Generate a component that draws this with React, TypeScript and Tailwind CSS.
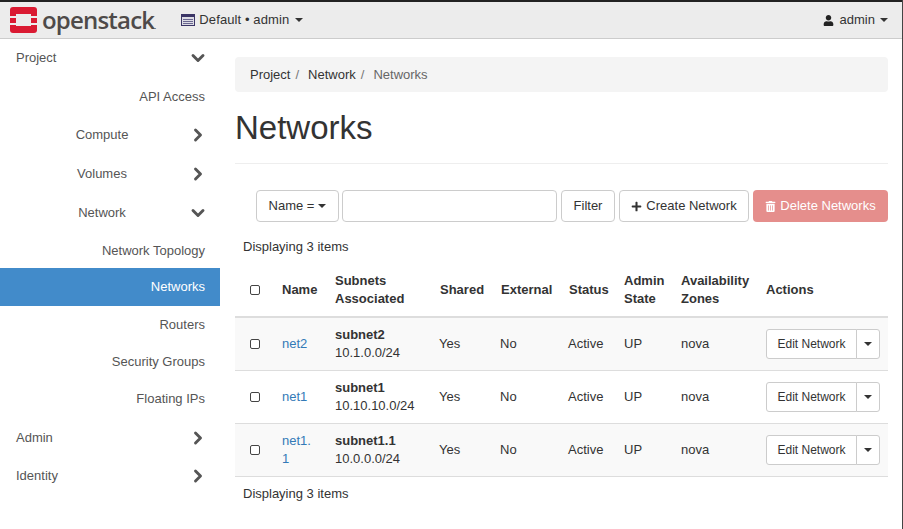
import { ChevronDown, ChevronRight } from "lucide-react"
import { FaPlus, FaTrashAlt, FaUser } from "react-icons/fa"

const navRows = [
  { label: "Compute", height: "h-[39px]", open: false },
  { label: "Volumes", height: "h-[38px] pt-[2px]", open: false },
  { label: "Network", height: "h-[39px] pt-[2px]", open: true },
]

const subRows = ["Network Topology", "Networks", "Routers", "Security Groups", "Floating IPs"]

const networks = [
  { name: "net2", subnet: "subnet2", cidr: "10.1.0.0/24", striped: true },
  { name: "net1", subnet: "subnet1", cidr: "10.10.10.0/24", striped: false },
  { name: "net1.1", subnet: "subnet1.1", cidr: "10.0.0.0/24", striped: true },
]

function Caret() {
  return <span className="inline-block h-0 w-0 border-x-[4px] border-t-[4px] border-x-transparent border-t-[#333]" />
}

function Logo() {
  return (
    <div className="flex items-center gap-[5px]">
      <svg width="27" height="26" viewBox="0 0 27 26">
        <rect x="0" y="0" width="27" height="26" rx="3" fill="#da1a32" />
        <rect x="6" y="7" width="15" height="12" fill="#ececec" />
        <rect x="0" y="9" width="6" height="2" fill="#ececec" />
        <rect x="21" y="9" width="6" height="2" fill="#ececec" />
        <rect x="0" y="16" width="6" height="2" fill="#ececec" />
        <rect x="21" y="16" width="6" height="2" fill="#ececec" />
      </svg>
      <span className="font-['Open_Sans',sans-serif] text-[24px] leading-none font-semibold tracking-[-0.8px] text-[#4e4a49]">
        openstack<span className="text-[7px]">.</span>
      </span>
    </div>
  )
}

function ProjectIcon() {
  return (
    <svg width="14" height="12" viewBox="0 0 14 12" className="text-[#3b3566]">
      <rect x="0.5" y="0.5" width="13" height="11" fill="#dcdce4" stroke="currentColor" />
      <rect x="0" y="0" width="14" height="3" fill="currentColor" />
      <rect x="2" y="5" width="10" height="1" fill="#6a6690" />
      <rect x="2" y="7" width="10" height="1" fill="#6a6690" />
      <rect x="2" y="9" width="10" height="1" fill="#6a6690" />
    </svg>
  )
}

function Sidebar() {
  return (
    <aside className="w-[220px] shrink-0 text-[13px] text-[#555]">
      <div className="flex h-[37px] items-center justify-between pl-[16px] pr-[12px]">
        <span>Project</span>
        <ChevronDown size={20} strokeWidth={3.5} className="mt-[1px]" />
      </div>
      <div className="flex h-[39px] items-center justify-end pr-[15px] pt-[2px]">API Access</div>
      {navRows.map((row) => (
        <div key={row.label} className={`flex ${row.height} items-center pr-[12px]`}>
          <span className="w-[204px] text-center">{row.label}</span>
          {row.open ? (
            <ChevronDown size={20} strokeWidth={3.5} className="-ml-[16px] shrink-0" />
          ) : (
            <ChevronRight size={20} strokeWidth={3.5} className="-ml-[16px] shrink-0" />
          )}
        </div>
      ))}
      {subRows.map((label) => (
        <div
          key={label}
          className={
            label === "Networks"
              ? "flex h-[38px] items-center justify-end bg-[#428bca] pr-[15px] text-white"
              : label === "Network Topology"
                ? "flex h-[37px] items-center justify-end pr-[15px] pt-[2px]"
                : "flex h-[37px] items-center justify-end pr-[15px]"
          }
        >
          {label}
        </div>
      ))}
      <div className="flex h-[39px] items-center justify-between pl-[16px] pr-[12px] pt-[2px]">
        <span>Admin</span>
        <ChevronRight size={20} strokeWidth={3.5} />
      </div>
      <div className="flex h-[38px] items-center justify-between pl-[16px] pr-[12px] pt-[2px]">
        <span>Identity</span>
        <ChevronRight size={20} strokeWidth={3.5} />
      </div>
    </aside>
  )
}

function NetworksTable() {
  return (
    <table className="w-[653px] table-fixed border-collapse text-[13px] leading-[18px] text-[#333]">
      <colgroup>
        <col className="w-[37px]" />
        <col className="w-[53px]" />
        <col className="w-[105px]" />
        <col className="w-[61px]" />
        <col className="w-[68px]" />
        <col className="w-[55px]" />
        <col className="w-[57px]" />
        <col className="w-[85px]" />
        <col className="w-[132px]" />
      </colgroup>
      <thead>
        <tr className="h-[50px] border-b-2 border-[#ddd] text-left font-bold [&>th]:pb-[4px]">
          <th className="pl-[15px]">
            <input type="checkbox" className="block h-[10px] w-[10px] appearance-none rounded-[2px] border border-[#444] bg-white" />
          </th>
          <th className="pl-[10px]">Name</th>
          <th className="pl-[10px]">
            Subnets
            <br />
            Associated
          </th>
          <th className="pl-[10px]">Shared</th>
          <th className="pl-[10px]">External</th>
          <th className="pl-[10px]">Status</th>
          <th className="pl-[10px]">
            Admin
            <br />
            State
          </th>
          <th className="pl-[10px]">
            Availability
            <br />
            Zones
          </th>
          <th className="pl-[10px]">Actions</th>
        </tr>
      </thead>
      <tbody>
        {networks.map((net) => (
          <tr key={net.name} className={`h-[53px] border-b border-[#ddd] ${net.striped ? "bg-[#f9f9f9]" : "bg-white"}`}>
            <td className="pl-[15px]">
              <input type="checkbox" className="block h-[10px] w-[10px] appearance-none rounded-[2px] border border-[#444] bg-white" />
            </td>
            <td className="pl-[10px] pr-[8px] break-all text-[#337ab7]">{net.name}</td>
            <td className="pl-[10px]">
              <div className="font-bold">{net.subnet}</div>
              <div>{net.cidr}</div>
            </td>
            <td className="pl-[9px]">Yes</td>
            <td className="pl-[9px]">No</td>
            <td className="pl-[9px]">Active</td>
            <td className="pl-[10px]">UP</td>
            <td className="pl-[10px]">nova</td>
            <td className="pl-[10px]">
              <div className="flex h-[30px] w-[114px] text-[12px]">
                <button className="w-[91px] rounded-l-[3px] border border-[#ccc] bg-white text-center">Edit Network</button>
                <button className="-ml-px flex w-[24px] items-center justify-center rounded-r-[3px] border border-[#ccc] bg-white">
                  <Caret />
                </button>
              </div>
            </td>
          </tr>
        ))}
      </tbody>
    </table>
  )
}

export default function App() {
  return (
    <div className="h-[529px] w-[903px] overflow-hidden border-r border-[#444] bg-white font-['Liberation_Sans',Arial,sans-serif]">
      <header className="flex h-[39px] items-center justify-between border-t-2 border-b border-t-[#222] border-b-[#ccc] bg-[#ececec] pl-[10px] pr-[14px] text-[13px] text-[#333]">
        <div className="flex items-center">
          <Logo />
          <div className="ml-[26px] flex items-center">
            <ProjectIcon />
            <span className="ml-[4px] tracking-[0.1px]">Default • admin</span>
            <span className="ml-[6px] flex">
              <Caret />
            </span>
          </div>
        </div>
        <div className="flex items-center">
          <FaUser size={11} className="text-[#222]" />
          <span className="ml-[6px]">admin</span>
          <span className="ml-[5px] flex">
            <Caret />
          </span>
        </div>
      </header>
      <div className="flex">
        <Sidebar />
        <main className="w-[668px] pl-[15px] text-[13px] text-[#333]">
          <nav className="mt-[18px] flex h-[35px] w-[653px] items-center gap-[5px] rounded-[4px] bg-[#f4f4f4] px-[15px]">
            <span>Project</span>
            <span className="text-[#777]">/</span>
            <span className="ml-[4px]">Network</span>
            <span className="text-[#777]">/</span>
            <span className="ml-[4px] text-[#666]">Networks</span>
          </nav>
          <h1 className="mt-[18px] h-[53px] w-[653px] text-[33px] leading-[36px] font-medium text-[#333]">Networks</h1>
          <div className="w-[653px] border-t border-[#eee]" />
          <div className="mt-[26px] flex h-[32px] w-[653px] items-stretch justify-end">
            <button className="flex w-[83px] items-center justify-center gap-[4px] rounded-[4px] border border-[#ccc] bg-white">
              Name =<Caret />
            </button>
            <div className="ml-[3px] w-[215px] rounded-[4px] border border-[#ccc] bg-white" />
            <button className="ml-[4px] w-[54px] rounded-[4px] border border-[#ccc] bg-white">Filter</button>
            <button className="ml-[4px] flex w-[130px] items-center justify-center gap-[4px] rounded-[4px] border border-[#ccc] bg-white">
              <FaPlus size={11} />
              Create Network
            </button>
            <button className="ml-[4px] flex w-[135px] items-center justify-center gap-[4px] rounded-[4px] bg-[#e58e8c] text-white">
              <FaTrashAlt size={11} />
              Delete Networks
            </button>
          </div>
          <div className="mt-[15px] pl-[8px] leading-[20px]">Displaying 3 items</div>
          <div className="mt-[10px]">
            <NetworksTable />
          </div>
          <div className="mt-[7px] pl-[8px] leading-[20px]">Displaying 3 items</div>
        </main>
      </div>
    </div>
  )
}
